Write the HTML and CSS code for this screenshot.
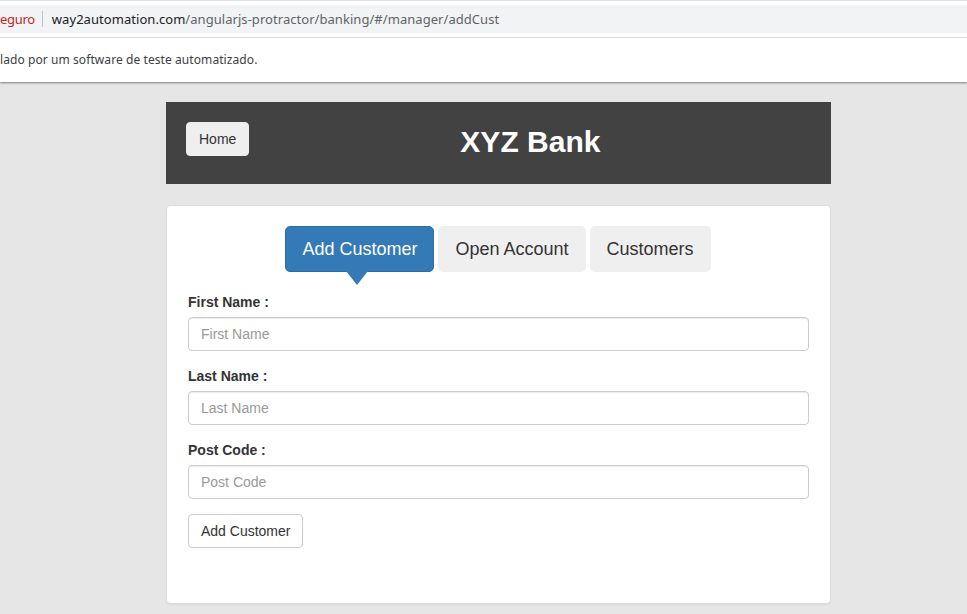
FILE: index.html
```html
<!DOCTYPE html>
<html lang="pt">
<head>
<meta charset="utf-8">
<title>XYZ Bank</title>
<link rel="stylesheet" href="styles.css">
</head>
<body>
<div class="chrome">
  <div class="addr">
    <span class="insecure">eguro</span>
    <span class="sep"></span>
    <span class="url"><span class="host">way2automation.com</span>/angularjs-protractor/banking/#/manager/addCust</span>
  </div>
  <div class="info">lado por um software de teste automatizado.</div>
</div>
<div class="page">
  <div class="container">
    <header class="mainhead">
      <button class="btn home">Home</button>
      <strong class="title">XYZ Bank</strong>
    </header>
    <div class="card">
      <div class="tabs">
        <button class="tab active">Add Customer</button>
        <button class="tab">Open Account</button>
        <button class="tab">Customers</button>
      </div>
      <form class="form">
        <div class="group">
          <label class="label">First Name :</label>
          <input class="input" type="text" placeholder="First Name">
        </div>
        <div class="group">
          <label class="label">Last Name :</label>
          <input class="input" type="text" placeholder="Last Name">
        </div>
        <div class="group">
          <label class="label">Post Code :</label>
          <input class="input" type="text" placeholder="Post Code">
        </div>
        <button type="button" class="btn submit">Add Customer</button>
      </form>
    </div>
  </div>
</div>
</body>
</html>
```
FILE: styles.css
```css
* { box-sizing: border-box; }
html, body { margin: 0; padding: 0; }
body {
  background: #e6e6e6;
  font-family: "Liberation Sans", Arial, sans-serif;
  color: #333;
  height: 614px;
  overflow: hidden;
}
.chrome {
  background: #fff;
  border-top: 1px solid #dfe1e5;
  height: 82px;
  padding-top: 4px;
  box-shadow: 0 1px 2px rgba(0,0,0,0.45);
  position: relative;
  z-index: 1;
}
.addr {
  height: 28px;
  background: #f1f3f4;
  display: flex;
  align-items: center;
  font-family: "Noto Sans", "Open Sans", sans-serif;
  font-size: 13px;
  letter-spacing: 0.05px;
}
.insecure { color: #c5221f; letter-spacing: -0.3px; }
.sep {
  width: 1px;
  height: 16px;
  background: #bdc1c6;
  margin: 0 9px 0 7px;
}
.url { color: #5f6368; }
.host { color: #202124; }
.info {
  margin-top: 4px;
  border-top: 1px solid #dadce0;
  height: 44px;
  display: flex;
  align-items: center;
  font-family: "Noto Sans", "Open Sans", sans-serif;
  font-size: 12px;
  color: #3c4043;
  letter-spacing: 0.08px;
}
.page {
  padding: 20px 0 0 166px;
}
.container { width: 665px; }
.mainhead {
  background: #424242;
  height: 82px;
  padding: 0 20px;
  display: flex;
  align-items: center;
}
.btn {
  font-family: "Liberation Sans", Arial, sans-serif;
  font-size: 14px;
  line-height: 20px;
  padding: 6px 12px;
  border-radius: 4px;
  color: #333;
  cursor: pointer;
}
.home {
  background: #efefef;
  border: 1px solid #efefef;
  margin-top: -8px;
}
.title {
  color: #fff;
  font-size: 30px;
  font-weight: bold;
  margin-left: 211px;
  margin-top: -2px;
}
.card {
  margin-top: 21px;
  background: #fff;
  border: 1px solid #dcdcdc;
  border-radius: 4px;
  box-shadow: 0 1px 1px rgba(0,0,0,0.05);
  height: 399px;
  padding: 20px 21px;
}
.tabs {
  display: flex;
  justify-content: center;
  gap: 4px;
  padding-right: 1px;
}
.tab {
  font-family: "Liberation Sans", Arial, sans-serif;
  font-size: 18px;
  line-height: 24px;
  padding: 10px 16px;
  border: 1px solid #efefef;
  background: #efefef;
  color: #333;
  border-radius: 5px;
  position: relative;
}
.tab.active {
  background: #337ab7;
  border-color: #2e6da4;
  color: #fff;
}
.tab.active::after {
  content: "";
  position: absolute;
  left: 60px;
  top: 100%;
  border-left: 11px solid transparent;
  border-right: 11px solid transparent;
  border-top: 14px solid #337ab7;
}
.form {
  margin-top: 20px;
}
.group {
  margin-bottom: 15px;
}
.label {
  display: block;
  font-size: 14px;
  line-height: 20px;
  font-weight: bold;
  margin-bottom: 5px;
  color: #333;
}
.input {
  display: block;
  width: 100%;
  height: 34px;
  padding: 6px 12px;
  font-family: "Liberation Sans", Arial, sans-serif;
  font-size: 14px;
  color: #555;
  border: 1px solid #ccc;
  border-radius: 4px;
  box-shadow: inset 0 1px 1px rgba(0,0,0,0.075);
}
.input::placeholder { color: #999; }
.submit {
  background: #fff;
  border: 1px solid #ccc;
}
```
